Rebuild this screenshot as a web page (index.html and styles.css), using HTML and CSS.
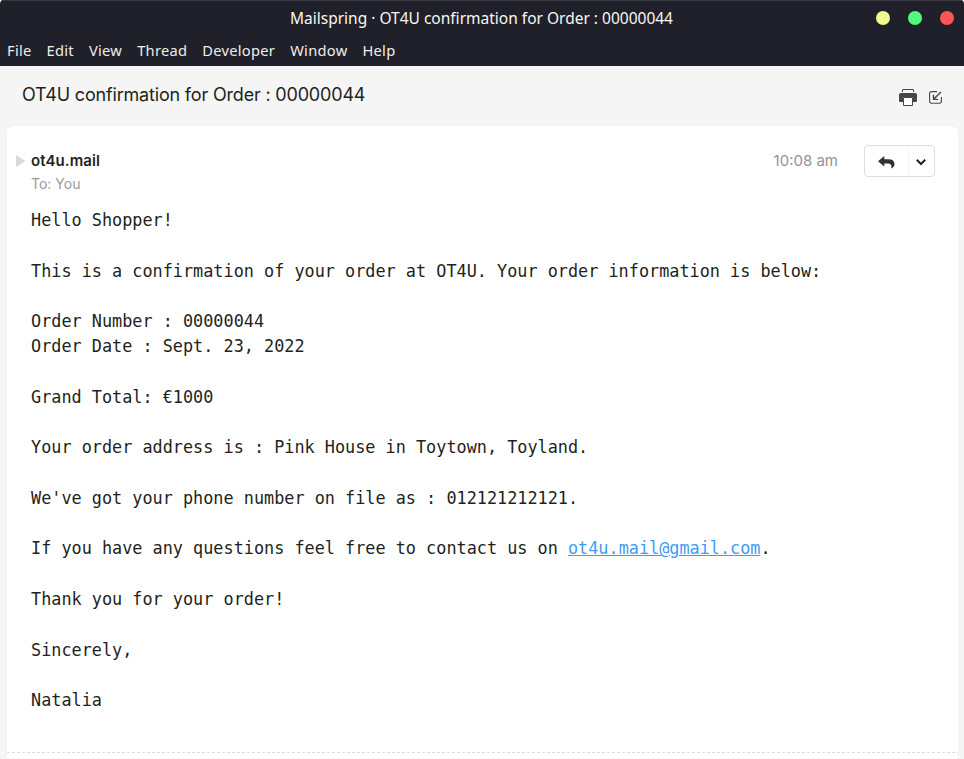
FILE: index.html
```html
<!DOCTYPE html>
<html lang="en">
<head>
<meta charset="utf-8">
<title>Mailspring</title>
<link rel="stylesheet" href="styles.css">
</head>
<body>
<div class="window">
  <header class="titlebar">
    <h1 class="window-title"><span>Mailspring · OT4U confirmation for Order : 00000044</span></h1>
    <div class="controls"><i class="dot yellow"></i><i class="dot green"></i><i class="dot red"></i></div>
  </header>
  <nav class="menu"><span>File</span><span>Edit</span><span>View</span><span>Thread</span><span>Developer</span><span>Window</span><span>Help</span></nav>
  <div class="subject-row">
    <h2 class="subject"><span>OT4U confirmation for Order : 00000044</span></h2>
    <div class="tools">
      <svg width="18" height="17" viewBox="0 0 18 17"><path d="M3.5 3V1Q3.500 .5 4 .5H14Q14.500 .5 14.500 1V3" fill="none" stroke="#4a4648"/><path d="M2 4H16Q18 4 18 6V12Q18 13 17 13H14V8H4V13H1Q0 13 0 12V6Q0 4 2 4Z" fill="#4a4648"/><path d="M4.500 8.500H13.500V16.500H4.500Z" fill="#fff" stroke="#4a4648"/></svg>
      <svg width="13" height="13" viewBox="0 0 13 13" fill="none" stroke="#4a4648" stroke-width="1.100"><path d="M8 .6H2.500Q.6 .6 .6 2.500V10Q.6 12.200 2.500 12.200H10.500Q12.400 12.200 12.400 10V6"/><path d="M12 1L4.800 8M4.500 3.800V8.400H9" stroke-width="1.400"/></svg>
    </div>
  </div>
  <main class="card">
    <div class="message-head">
      <svg class="disclosure" width="10" height="12" viewBox="0 0 10 12"><path d="M0 0L9.500 6L0 12Z" fill="#dadada"/></svg>
      <div class="people"><div class="from"><span>ot4u.mail</span></div><div class="to"><span>To: You</span></div></div>
      <time class="time"><span>10:08 am</span></time>
      <div class="reply">
        <span class="reply-main"><svg width="17" height="13" viewBox="0 0 17 13"><path d="M0 5.300L6.300 0V3.200H10.500Q16.500 3.200 16.500 8Q16.500 11 13 12.600Q14 10.500 13 8.800Q12 7.500 9.500 7.500H6.300V10.600Z" fill="#333031"/></svg></span>
        <span class="reply-more"><svg width="10" height="7" viewBox="0 0 10 7"><path d="M.8 .8L5 5L9.200 .8" fill="none" stroke="#231f20" stroke-width="2"/></svg></span>
      </div>
    </div>
    <div class="body">
      <p>Hello Shopper!</p>
      <p>This is a confirmation of your order at OT4U. Your order information is below:</p>
      <p>Order Number : 00000044<br>Order Date : Sept. 23, 2022</p>
      <p>Grand Total: €1000</p>
      <p>Your order address is : Pink House in Toytown, Toyland.</p>
      <p>We've got your phone number on file as : 012121212121.</p>
      <p class="contact"><span>If you have any questions feel free to contact us on </span><a>ot4u.mail@gmail.com</a><span>.</span></p>
      <p>Thank you for your order!</p>
      <p>Sincerely,</p>
      <p>Natalia</p>
    </div>
    <svg class="divider" width="951" height="1"><path d="M0 .5H951" stroke="#dddddd" stroke-dasharray="3 2"/></svg>
  </main>
</div>
</body>
</html>
```
FILE: styles.css
```css
* { box-sizing: border-box; }
body { margin: 0; background: #fff; overflow: hidden; }
svg { display: block; }
.window { width: 964px; height: 759px; background: #f5f5f5; border-radius: 4px 4px 0 0; overflow: hidden; display: flex; flex-direction: column; font-family: Inter, sans-serif; }
.titlebar { height: 36px; flex: none; background: #20202a; border-top: 1px solid #383943; border-bottom: 1px solid #1d1d27; display: grid; grid-template-columns: 1fr auto 1fr; align-items: center; }
.window-title { grid-column: 2; margin: 0 1px 0 0; font: 400 15.5px/34px "Noto Sans", sans-serif; color: #f8f8f2; }
.controls { display: flex; gap: 18px; justify-content: flex-end; padding-right: 10px; }
.dot { width: 14px; height: 14px; border-radius: 50%; }
.yellow { background: #f1fa8c; }
.green { background: #50fa7b; }
.red { background: #ff5555; }
.menu { height: 30px; flex: none; background: #20202a; color: #eeeeea; display: flex; gap: 15px; padding-left: 7px; font: 14.67px/28px "Noto Sans", sans-serif; letter-spacing: .28px; }
.subject-row { height: 60px; flex: none; display: flex; justify-content: space-between; padding: 0 22px; }
.subject { margin: 0; font-size: 18px; font-weight: 400; line-height: 58px; letter-spacing: -.18px; color: #231f20; }
.tools { display: flex; gap: 12px; align-items: center; padding-top: 3px; }
.card { width: 951px; height: 633px; margin-left: 7px; background: #fff; border-radius: 6px 6px 0 0; box-shadow: 0 0 1px #ddd; display: flex; flex-direction: column; }
.message-head { display: flex; height: 82px; flex: none; padding: 19px 23px 0 9px; }
.disclosure { margin-top: 10px; }
.people { margin-left: 5px; flex: 1; }
.from { font-size: 15px; font-weight: 600; line-height: 32px; letter-spacing: .1px; color: #231f20; }
.to { font-size: 14px; line-height: 20px; margin-top: -3px; color: #999; }
.time { font-size: 15px; line-height: 32px; color: #949293; margin-right: 26px; }
.reply { width: 71px; height: 32px; border: 1px solid #dedede; border-radius: 4px; display: flex; }
.reply-main { width: 44px; border-right: 1px solid #f3f3f3; display: flex; align-items: center; justify-content: center; padding-top: 3px; }
.reply-more { flex: 1; display: flex; align-items: center; justify-content: center; padding: 3px 1px 0 0; }
.body { padding-left: 24px; font: 16.83px/25.27px "DejaVu Sans Mono", monospace; color: #231f20; height: 544px; flex: none; }
.body p { margin: 0 0 25.27px; }
.contact { display: flex; white-space: pre; }
.body a { color: #419bf9; text-decoration: underline; }
.divider { flex: none; }
```
